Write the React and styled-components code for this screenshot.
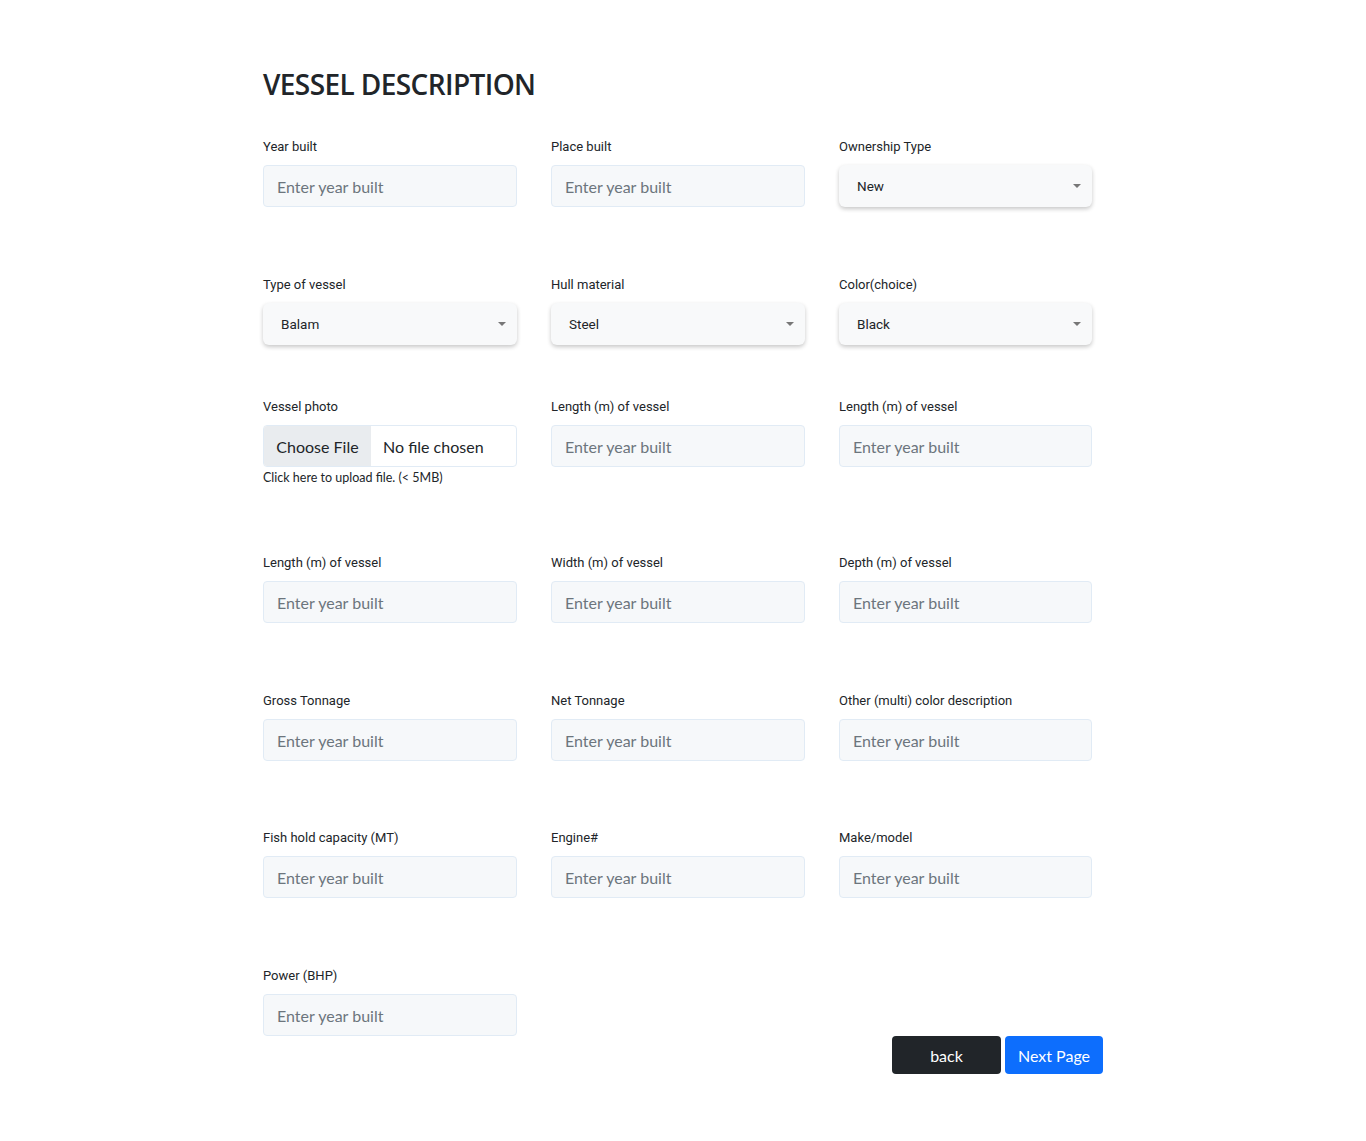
import React from "react";
import styled, { createGlobalStyle } from "styled-components";

const GlobalStyle = createGlobalStyle`
  body {
    margin: 0;
    background: #ffffff;
    color: #212529;
    font-family: Lato, "Liberation Sans", sans-serif;
  }
  * { box-sizing: border-box; }
`;

const rows = [
  {
    gap: 67,
    fields: [
      { label: "Year built", kind: "text" },
      { label: "Place built", kind: "text" },
      { label: "Ownership Type", kind: "select", value: "New" },
    ],
  },
  {
    gap: 51,
    fields: [
      { label: "Type of vessel", kind: "select", value: "Balam" },
      { label: "Hull material", kind: "select", value: "Steel" },
      { label: "Color(choice)", kind: "select", value: "Black" },
    ],
  },
  {
    gap: 67,
    fields: [
      { label: "Vessel photo", kind: "file" },
      { label: "Length (m) of vessel", kind: "text" },
      { label: "Length (m) of vessel", kind: "text" },
    ],
  },
  {
    gap: 68,
    fields: [
      { label: "Length (m) of vessel", kind: "text" },
      { label: "Width (m) of vessel", kind: "text" },
      { label: "Depth (m) of vessel", kind: "text" },
    ],
  },
  {
    gap: 67,
    fields: [
      { label: "Gross Tonnage", kind: "text" },
      { label: "Net Tonnage", kind: "text" },
      { label: "Other (multi) color description", kind: "text" },
    ],
  },
  {
    gap: 68,
    fields: [
      { label: "Fish hold capacity (MT)", kind: "text" },
      { label: "Engine#", kind: "text" },
      { label: "Make/model", kind: "text" },
    ],
  },
  {
    gap: 0,
    fields: [{ label: "Power (BHP)", kind: "text" }],
  },
];

const Field = ({ field }) => {
  if (field.kind === "select") {
    return (
      <Group>
        <Label>{field.label}</Label>
        <Select>
          <span>{field.value}</span>
          <Caret />
        </Select>
      </Group>
    );
  }
  if (field.kind === "file") {
    return (
      <Group>
        <Label>{field.label}</Label>
        <FileBox>
          <FileButton>Choose File</FileButton>
          <FileName>No file chosen</FileName>
        </FileBox>
        <Help>Click here to upload file. (&lt; 5MB)</Help>
      </Group>
    );
  }
  return (
    <Group>
      <Label>{field.label}</Label>
      <Input placeholder="Enter year built" />
    </Group>
  );
};

const App = () => {
  return (
    <Page>
      <GlobalStyle />
      <Title>VESSEL DESCRIPTION</Title>
      {rows.map((row, i) => (
        <Row key={i} $gap={row.gap}>
          {row.fields.map((f, j) => (
            <Field key={j} field={f} />
          ))}
        </Row>
      ))}
      <Actions>
        <BackButton>back</BackButton>
        <NextButton>Next Page</NextButton>
      </Actions>
    </Page>
  );
};

const Page = styled.main`
  width: 840px;
  margin: 0 auto;
  padding: 67px 0 67px;
`;

const Title = styled.h3`
  margin: 0 0 36px;
  font-family: "Open Sans", Lato, sans-serif;
  font-weight: 600;
  font-size: 28px;
  line-height: 34px;
  letter-spacing: -0.6px;
  color: #212529;
`;

const Row = styled.div`
  display: grid;
  grid-template-columns: 254px 254px 253px;
  column-gap: 34px;
  margin-bottom: ${(p) => p.$gap}px;
`;

const Group = styled.div`
  display: flex;
  flex-direction: column;
`;

const Label = styled.label`
  font-family: Roboto, "Liberation Sans", sans-serif;
  font-size: 13px;
  line-height: 20px;
  color: #212529;
  margin-bottom: 8px;
`;

const Input = styled.input`
  height: 42px;
  width: 100%;
  padding: 0 13px;
  border: 1px solid #e1ebf5;
  border-radius: 4px;
  background: #f6f8fa;
  font-family: Lato, "Liberation Sans", sans-serif;
  font-size: 16px;
  color: #212529;
  outline: none;

  &::placeholder {
    color: #6c757d;
  }
`;

const Select = styled.div`
  height: 42px;
  display: flex;
  align-items: center;
  justify-content: space-between;
  padding: 0 11px 0 18px;
  border-radius: 6px;
  background: #f8f9fa;
  box-shadow: 0 2px 4px rgba(0, 0, 0, 0.22);
  font-family: Roboto, "Liberation Sans", sans-serif;
  font-size: 13.5px;
  color: #212529;
  margin-bottom: 1px;
`;

const Caret = styled.span`
  width: 0;
  height: 0;
  border-left: 4px solid transparent;
  border-right: 4px solid transparent;
  border-top: 4px solid #777;
`;

const FileBox = styled.div`
  height: 42px;
  display: flex;
  align-items: stretch;
  border: 1px solid #e1ebf5;
  border-radius: 4px;
  overflow: hidden;
  background: #fff;
  font-family: Lato, "Liberation Sans", sans-serif;
  font-size: 16px;
  color: #212529;
`;

const FileButton = styled.span`
  width: 107px;
  display: flex;
  align-items: center;
  justify-content: center;
  background: #e9ecef;
`;

const FileName = styled.span`
  display: flex;
  align-items: center;
  padding-left: 12px;
`;

const Help = styled.div`
  margin-top: 3px;
  font-family: Lato, "Liberation Sans", sans-serif;
  font-size: 12.5px;
  line-height: 16px;
  color: #212529;
`;

const Actions = styled.div`
  display: flex;
  justify-content: flex-end;
  gap: 4px;
`;

const BaseButton = styled.button`
  height: 38px;
  border: none;
  border-radius: 4px;
  font-family: Lato, "Liberation Sans", sans-serif;
  font-size: 16px;
  color: #fff;
  cursor: pointer;
`;

const BackButton = styled(BaseButton)`
  width: 109px;
  background: #212529;
`;

const NextButton = styled(BaseButton)`
  width: 98px;
  background: #0d6efd;
`;

export default App;
